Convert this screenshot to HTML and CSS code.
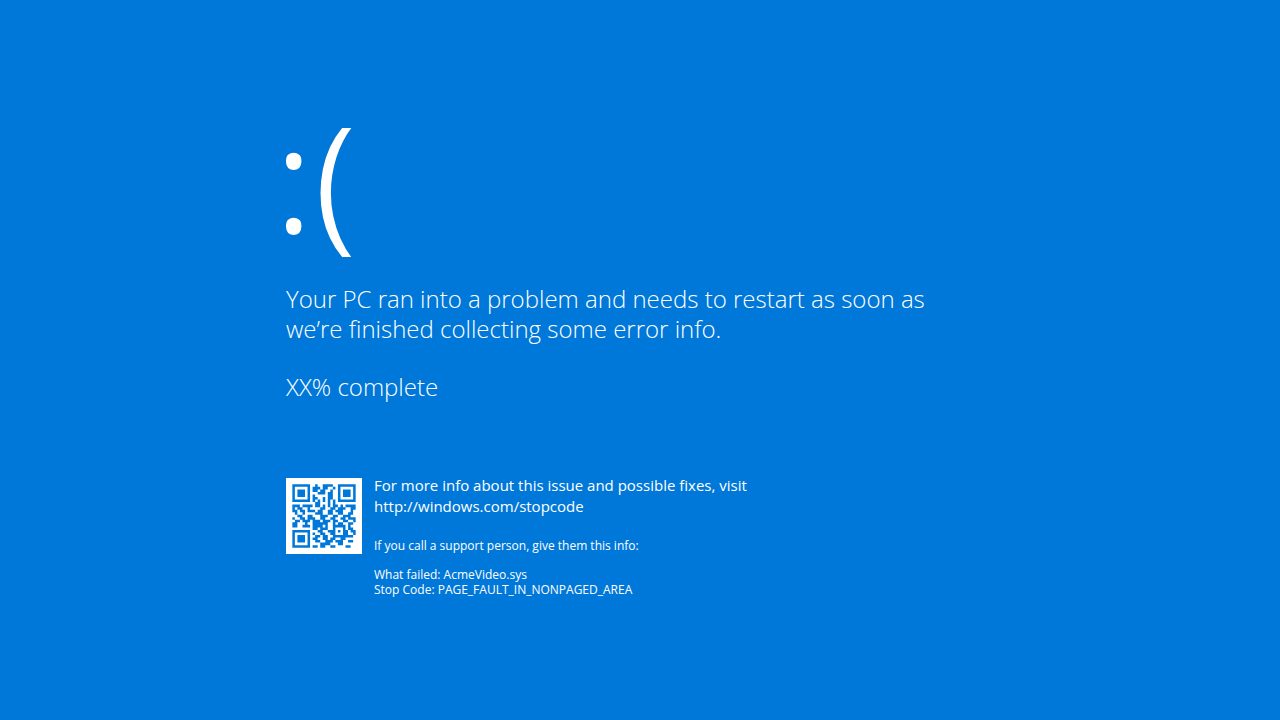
FILE: index.html
```
<!DOCTYPE html>
<html lang="en">
<head>
<meta charset="utf-8">
<meta name="viewport" content="width=device-width, initial-scale=1">
<title>Stop error</title>
<link rel="stylesheet" href="styles.css">
</head>
<body>
<main class="screen">
  <div class="face">:(</div>
  <h1 class="message">Your PC ran into a problem and needs to restart as soon as we’re finished collecting some error info.</h1>
  <p class="progress">XX% complete</p>
  <section class="details">
    <svg class="qr" viewBox="0 0 30 30" role="img" aria-label="QR code"></svg>
    <div class="info">
      <p class="more">For more info about this issue and possible fixes, visit <span class="url">http://windows.com/stopcode</span></p>
      <p class="support">If you call a support person, give them this info:</p>
      <p class="codes">What failed: AcmeVideo.sys<br>Stop Code: PAGE_FAULT_IN_NONPAGED_AREA</p>
    </div>
  </section>
</main>
<script src="qr.js"></script>
</body>
</html>
```
FILE: styles.css
```
* {
  box-sizing: border-box;
}

body {
  margin: 0;
  min-height: 100vh;
  background: #0078d9;
  color: #fff;
  font-family: "Open Sans", "Noto Sans", sans-serif;
}

.screen {
  max-width: 740px;
  margin: 0 auto;
  padding: 86px 16px 40px;
}

.face {
  margin-left: -12px;
  padding-bottom: 18px;
  font-size: 150px;
  font-weight: 400;
  line-height: 180px;
  -webkit-text-stroke: 2px #0078d9;
}

.message,
.progress {
  max-width: 672px;
  margin: 0;
  font-size: 24px;
  font-weight: 300;
  line-height: 30px;
}

.progress {
  margin-top: 28px;
}

.details {
  display: flex;
  align-items: flex-start;
  gap: 12px;
  margin-top: 76px;
}

.qr {
  flex: none;
  width: 76px;
  height: 76px;
  background: #fff;
}

.qr-modules {
  fill: #0078d9;
}

.info {
  margin-top: -3px;
}

.info p {
  margin: 0;
}

.info .more {
  font-size: 15px;
  line-height: 21px;
}

.url {
  display: block;
}

.info .support,
.info .codes {
  font-size: 12px;
  line-height: 15px;
}

.info .support {
  margin-top: 21px;
}

.info .codes {
  margin-top: 14px;
}
```
FILE: qr.js
```
const rows = [
  "#######..#..####..#######",
  "#.....#.###.##..#.#.....#",
  "#.###.#.##.##..#..#.###.#",
  "#.###.#...###.##..#.###.#",
  "#.###.#.#.....##..#.###.#",
  "#.....#.##..#.##..#.....#",
  "#######.#.#.#.#.#.#######",
  ".........##...#.#........",
  "###.####.##.#.#.##.#.####",
  "#.##..#....##..##.###..##",
  "##.##.###.##..##.###...#.",
  ".#..#....###..##..##..##.",
  "..##..##...###..##..###..",
  "#..##.###..##..##..##.###",
  ".##.###.###.###.##..##..#",
  "##...#..######..#.##..##.",
  "##..###.####.#..#####.#..",
  "........##.###..#...#.##.",
  "#######...##..###.#.##.##",
  "#.....#.#..##..##...##..#",
  "#.###.#..##.##..########.",
  "#.###.#.##..##.##..##....",
  "#.###.#..##..###.###..##.",
  "#.....#....####...##.....",
  "#######.##.##..##....##.."
];

const quiet = 2.5;
const path = document.createElementNS("http://www.w3.org/2000/svg", "path");
let d = "";
rows.forEach((row, y) => {
  [...row].forEach((cell, x) => {
    if (cell === "#") d += `M${x + quiet} ${y + quiet}h1v1h-1z`;
  });
});
path.setAttribute("d", d);
path.setAttribute("class", "qr-modules");
document.querySelector(".qr").append(path);
```
